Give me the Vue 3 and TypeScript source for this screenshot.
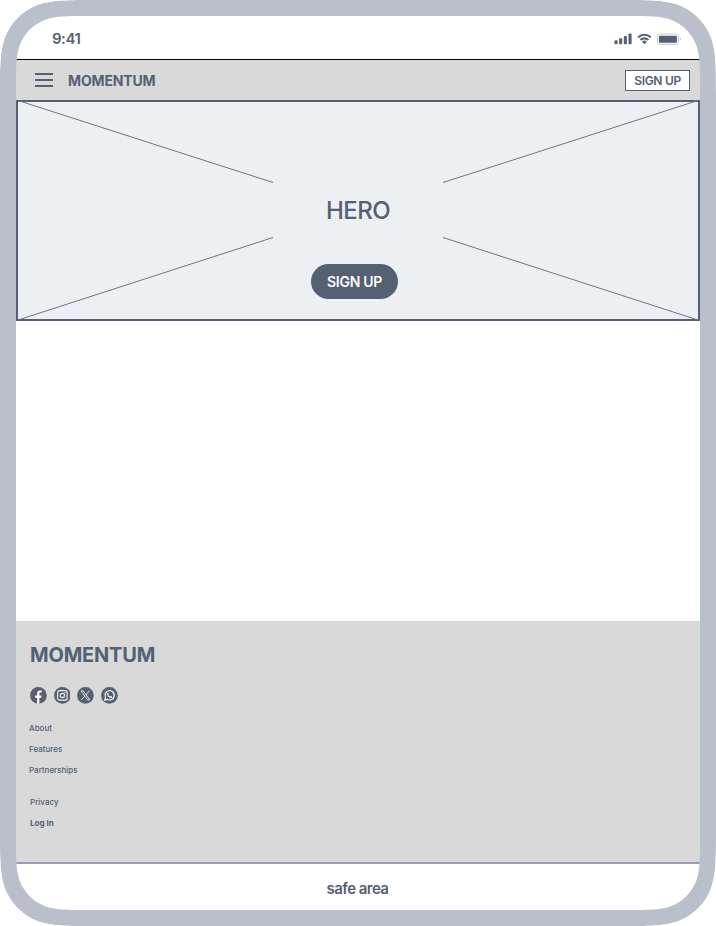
<script setup lang="ts">
// Continuous-curvature rounded rectangle, used for the bezel's two outlines.
function squircle(x: number, y: number, w: number, h: number, r: number): string {
  const k = [1.52866, 1.08849, 0.86841, 0.63149, 0.37282, 0.16906, 0.07491].map((v) => v * r)
  const [a, b, c, d, e, f, g] = k
  const R = x + w
  const B = y + h
  return [
    `M${x + a} ${y}H${R - a}`,
    `C${R - b} ${y} ${R - c} ${y} ${R - d} ${y + g}`,
    `C${R - e} ${y + f} ${R - f} ${y + e} ${R - g} ${y + d}`,
    `C${R} ${y + c} ${R} ${y + b} ${R} ${y + a}V${B - a}`,
    `C${R} ${B - b} ${R} ${B - c} ${R - g} ${B - d}`,
    `C${R - f} ${B - e} ${R - e} ${B - f} ${R - d} ${B - g}`,
    `C${R - c} ${B} ${R - b} ${B} ${R - a} ${B}H${x + a}`,
    `C${x + b} ${B} ${x + c} ${B} ${x + d} ${B - g}`,
    `C${x + e} ${B - f} ${x + f} ${B - e} ${x + g} ${B - d}`,
    `C${x} ${B - c} ${x} ${B - b} ${x} ${B - a}V${y + a}`,
    `C${x} ${y + b} ${x} ${y + c} ${x + g} ${y + d}`,
    `C${x + f} ${y + e} ${x + e} ${y + f} ${x + d} ${y + g}`,
    `C${x + c} ${y} ${x + b} ${y} ${x + a} ${y}Z`,
  ].join('')
}

const outer = squircle(0, 0, 716, 926, 61)
const inner = squircle(16, 16, 684, 894, 47)
const corners = `M0 0H716V926H0Z${outer}`
const bezel = outer + inner

const primaryLinks: string[] = ['About', 'Features', 'Partnerships']
</script>

<template>
  <div class="device">
    <div class="screen">
      <div class="status">
        <span class="time">9:41</span>
        <svg class="indicators" width="68" height="14" viewBox="0 0 68 14">
          <g fill="#556072">
            <rect x="0.5" y="8.2" width="3.1" height="4" rx="0.9" />
            <rect x="5.1" y="6.2" width="3.1" height="6" rx="0.9" />
            <rect x="9.8" y="4" width="3.1" height="8.2" rx="0.9" />
            <rect x="14.5" y="1.6" width="3.1" height="10.6" rx="0.9" />
            <path d="M30.4 3.8c2 0 3.9.8 5.4 2.2.1.1.3.1.4 0l1.1-1.1c.1-.1.1-.3 0-.4a10 10 0 0 0-13.800 0c-.1.1-.1.3 0 .4l1.100 1.100c.1.1.3.1.4 0a7.900 7.900 0 0 1 5.400-2.200z" />
            <path d="M30.400 7.400c1.100 0 2.200.4 3 1.200.1.1.3.1.4 0l1.100-1.100c.1-.1.1-.3 0-.4a6.600 6.600 0 0 0-9 0c-.1.1-.1.3 0 .4l1.100 1.100c.1.1.3.1.4 0 .8-.8 1.900-1.200 3-1.200z" />
            <path d="M32.600 9.900c.1-.1.1-.3 0-.4a3.400 3.400 0 0 0-4.400 0c-.1.1-.1.3 0 .4l2 2c.1.1.300.1.400 0z" />
            <rect x="44.900" y="3.700" width="18" height="7" rx="1.200" />
          </g>
          <rect x="43.400" y="2" width="21" height="10.300" rx="2.600" fill="none" stroke="#c3c7ce" />
          <path d="M65.800 5.400v3.400q1.100-.5 1.100-1.700t-1.100-1.700z" fill="#bbbfc7" />
        </svg>
      </div>

      <header class="nav">
        <svg class="menu" width="18" height="14" viewBox="0 0 18 14">
          <path d="M0 1H18M0 7H18M0 13H18" stroke="#556072" stroke-width="2" />
        </svg>
        <span class="brand">MOMENTUM</span>
        <button class="nav-cta">SIGN UP</button>
      </header>

      <section class="hero">
        <svg class="cross" width="684" height="221" viewBox="0 0 684 221">
          <path d="M2 0.500L257 82.500M682 0.500L427 82.500M2 220L257 137.500M682 220L427 137.500" fill="none" stroke="#6c7586" />
        </svg>
        <h1>HERO</h1>
        <button class="hero-cta">SIGN UP</button>
      </section>

      <main class="blank"></main>

      <footer class="footer">
        <h2>MOMENTUM</h2>
        <div class="social">
          <svg viewBox="0 0 17 17">
            <circle cx="8.500" cy="8.500" r="8.500" fill="#556072" />
            <path d="M7.200 17V10.800H5.200V8.500h2V6.700c0-2.100 1.200-3.200 3-3.200.9 0 1.600.1 1.600.1v2h-1c-1 0-1.300.6-1.300 1.200v1.700h2.200l-.4 2.300H9.500V17z" fill="#fff" />
          </svg>
          <svg viewBox="0 0 17 17">
            <circle cx="8.500" cy="8.500" r="8.500" fill="#556072" />
            <g fill="none" stroke="#f4f5f6" stroke-width="1.100">
              <rect x="3.700" y="3.700" width="9.600" height="9.600" rx="2" />
              <circle cx="8.500" cy="8.500" r="2.100" />
            </g>
            <circle cx="11.200" cy="5.800" r="0.650" fill="#f4f5f6" />
          </svg>
          <svg viewBox="0 0 17 17">
            <circle cx="8.500" cy="8.500" r="8.500" fill="#556072" />
            <path d="M4.200 4h2.200l6.400 9h-2.200zM12.600 3.800L9.200 7.800M7.800 9.300L4.300 13.200" fill="none" stroke="#f0f1f3" stroke-width="0.900" />
          </svg>
          <svg viewBox="0 0 17 17">
            <circle cx="8.500" cy="8.500" r="8.500" fill="#556072" />
            <path d="M3.900 13.200l.7-2.500a4.700 4.700 0 1 1 1.800 1.800z" fill="none" stroke="#fff" stroke-width="1.200" />
            <path d="M6.500 6.300c.4-.5.900-.4 1 0l.4.900c.1.300-.4.700-.4.900.4.800 1 1.300 1.800 1.600.3 0 .5-.7.800-.6l1 .5c.3.200.1.900-.3 1.200-1.900 1.200-5.500-2.400-4.300-4.500z" fill="#fff" />
          </svg>
        </div>
        <nav class="links">
          <a v-for="link in primaryLinks" :key="link">{{ link }}</a>
        </nav>
        <nav class="links account">
          <a>Privacy</a>
          <a class="login">Log In</a>
        </nav>
      </footer>

      <div class="safe-area">safe area</div>
    </div>

    <svg class="bezel" width="716" height="926" viewBox="0 0 716 926">
      <path :d="bezel" fill="#b9c0cb" fill-rule="evenodd" />
      <path :d="corners" fill="#fff" fill-rule="evenodd" />
    </svg>
  </div>
</template>

<style>
body {
  margin: 0;
  background: #fff;
}
</style>

<style scoped>
.device {
  position: relative;
  box-sizing: border-box;
  width: 716px;
  height: 926px;
  padding: 16px;
  overflow: hidden;
  font-family: Inter, 'Liberation Sans', sans-serif;
  color: #556072;
}
.screen {
  display: flex;
  flex-direction: column;
  height: 894px;
  background: #fff;
}
.bezel {
  position: absolute;
  inset: 0;
  pointer-events: none;
}
h1,
h2 {
  margin: 0;
}
button {
  box-sizing: border-box;
  padding: 0;
  font-family: inherit;
  white-space: nowrap;
}
.status {
  display: flex;
  justify-content: space-between;
  box-sizing: border-box;
  height: 44px;
  padding: 13px 18px 0 36px;
  border-bottom: 1px solid #000;
}
.time {
  font-size: 15px;
  line-height: 20px;
  font-weight: 600;
  letter-spacing: -0.5px;
}
.indicators {
  margin-top: 3px;
}
.nav {
  display: flex;
  align-items: center;
  box-sizing: border-box;
  height: 40px;
  padding: 0 10px 0 19px;
  background: #d9d9d9;
}
.brand {
  margin-left: 15px;
  padding-top: 2px;
  font-size: 14px;
  line-height: 20px;
  font-weight: 700;
  letter-spacing: -0.15px;
}
.nav-cta {
  width: 65px;
  height: 21px;
  margin-left: auto;
  border: 1px solid #556072;
  background: #fff;
  color: #556072;
  font-size: 12px;
  line-height: 19px;
  font-weight: 600;
  letter-spacing: -0.3px;
}
.hero {
  position: relative;
  display: flex;
  flex-direction: column;
  align-items: center;
  box-sizing: border-box;
  height: 221px;
  border: 2px solid #556072;
  background: #edf0f3;
}
.cross {
  position: absolute;
  top: -2px;
  left: -2px;
}
.hero h1 {
  margin-top: 94px;
  font-size: 24px;
  line-height: 30px;
  font-weight: 500;
  letter-spacing: -0.6px;
}
.hero-cta {
  width: 87px;
  height: 35px;
  margin: 38px 7px 0 0;
  border: 0;
  border-radius: 18px;
  background: #556072;
  color: #fff;
  font-size: 14px;
  line-height: 35px;
  font-weight: 600;
  letter-spacing: -0.3px;
}
.blank {
  height: 300px;
}
.footer {
  box-sizing: border-box;
  height: 243px;
  padding: 19px 13px 0;
  border-bottom: 2px solid #979fac;
  background: #d9d9d9;
}
.footer h2 {
  padding-left: 1px;
  font-size: 20px;
  line-height: 30px;
  font-weight: 700;
  letter-spacing: -0.2px;
}
.social {
  display: flex;
  gap: 6.9px;
  margin-top: 17px;
  padding-left: 1px;
}
.social svg {
  width: 16.8px;
  height: 16.8px;
}
.links {
  display: flex;
  flex-direction: column;
  gap: 11px;
  margin-top: 19.2px;
  font-size: 8px;
  line-height: 10px;
  font-weight: 500;
}
.account {
  margin-top: 22px;
  padding-left: 1px;
}
.login {
  font-weight: 700;
}
.safe-area {
  padding: 15px 1px 0 0;
  text-align: center;
  font-size: 15px;
  line-height: 20px;
  font-weight: 600;
  letter-spacing: -0.55px;
}
</style>
